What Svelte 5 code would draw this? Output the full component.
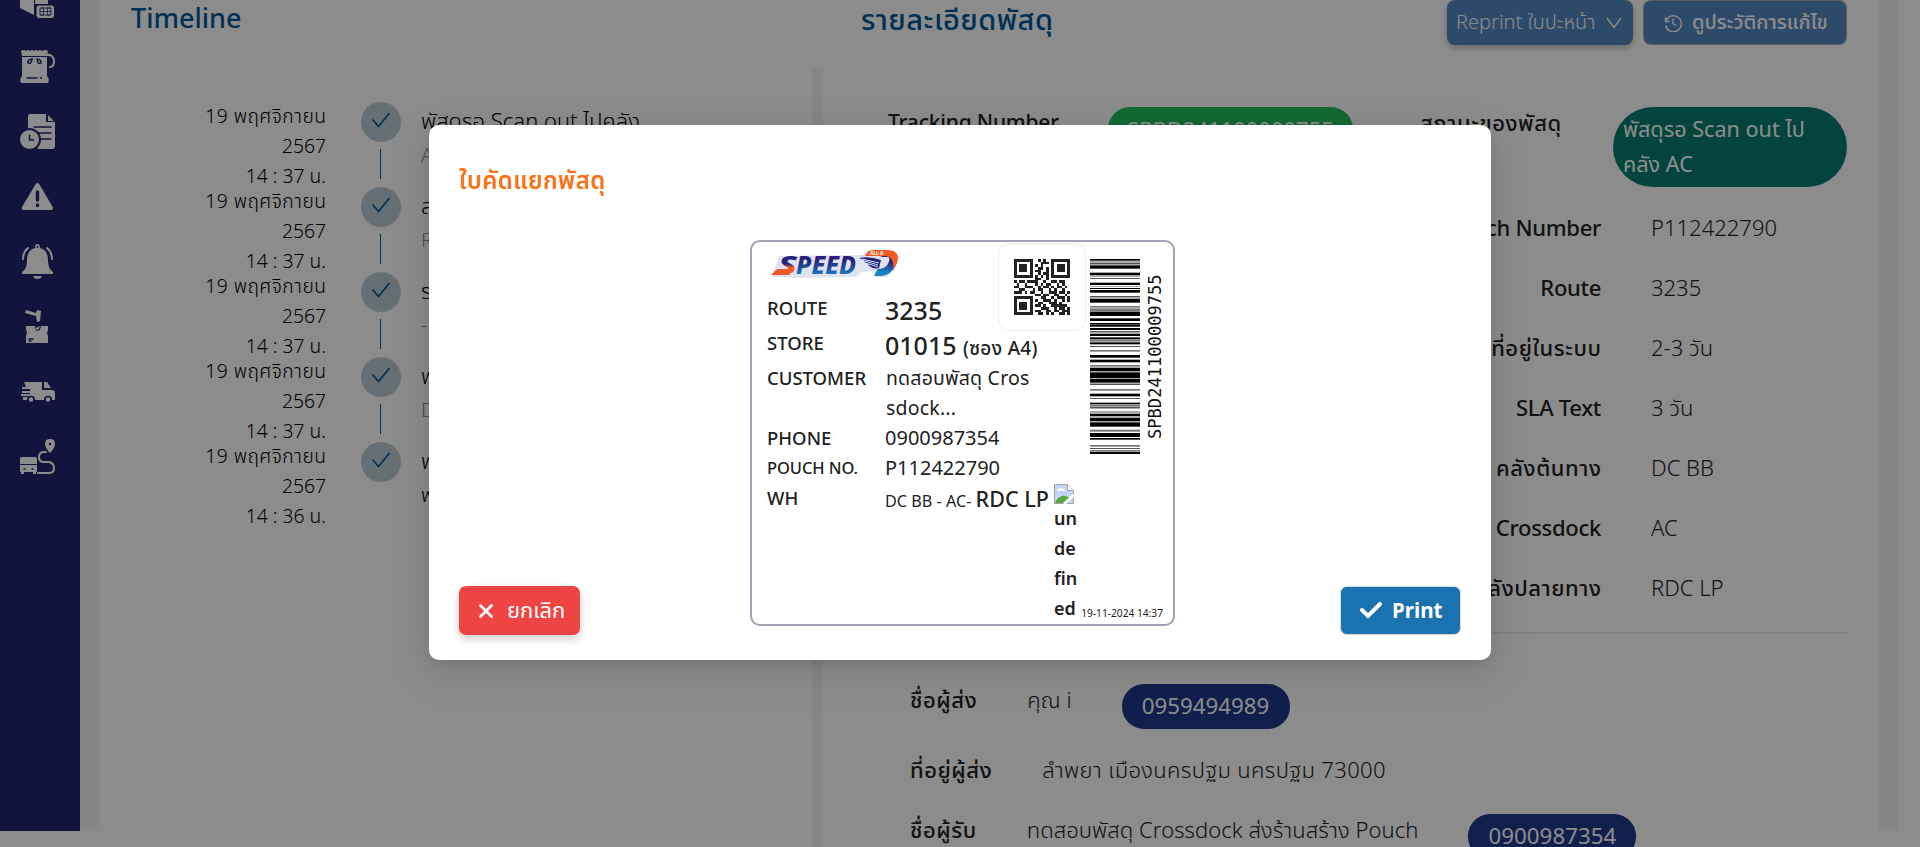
<script>
  const timeline = [
    { time: '14 : 37 น.', title: 'พัสดุรอ Scan out ไปคลัง', note: 'A' },
    { time: '14 : 37 น.', title: 'ส', note: 'R' },
    { time: '14 : 37 น.', title: 'ร', note: '-' },
    { time: '14 : 37 น.', title: 'พ', note: 'D' },
    { time: '14 : 36 น.', title: 'พ', note: 'พ', dark: true }
  ];

  const details = [
    { name: 'Pouch Number', value: 'P112422790' },
    { name: 'Route', value: '3235' },
    { name: 'ที่อยู่ในระบบ', value: '2-3 วัน', thai: true },
    { name: 'SLA Text', value: '3 วัน' },
    { name: 'คลังต้นทาง', value: 'DC BB', thai: true },
    { name: 'คลัง Crossdock', value: 'AC' },
    { name: 'คลังปลายทาง', value: 'RDC LP', thai: true }
  ];

  const qr = [
    '111111100101001111111',
    '100000100011101000001',
    '101110101010001011101',
    '101110100110101011101',
    '101110101100101011101',
    '100000100101101000001',
    '111111101010101111111',
    '000000001100100000000',
    '101101111001001101100',
    '010010001010110010100',
    '110011100101101011010',
    '001100010110010100100',
    '111010110010011101101',
    '000000001101100110010',
    '111111100011001011101',
    '100000101001110100101',
    '101110100110011101000',
    '101110101101001111110',
    '101110100011100101101',
    '100000101100110110111',
    '111111100110101001101'
  ];

  // [offset, thickness, shade] in thirds of a pixel
  const bars = [
    [0, 5, 0], [8, 2, 0], [13, 3, 0], [19, 10, 0], [41, 7, 0], [50, 2, 0], [57, 2, 0],
    [71, 7, 0], [82, 2, 1], [87, 3, 0], [93, 8, 0], [111, 2, 0], [116, 2, 0],
    [120, 11, 0], [141, 3, 1], [146, 2, 0], [150, 7, 1], [158, 13, 0],
    [178, 8, 0], [192, 3, 0], [196, 7, 0], [207, 6, 0], [217, 3, 0], [224, 7, 0],
    [235, 6, 0], [242, 6, 1], [250, 6, 0], [261, 2, 0], [273, 5, 1],
    [288, 8, 0], [302, 8, 0], [318, 5, 1], [326, 11, 0], [340, 17, 0],
    [359, 12, 0], [374, 3, 0], [390, 5, 1], [404, 8, 0], [417, 2, 0],
    [431, 5, 0], [437, 6, 1], [445, 3, 0], [458, 2, 0], [464, 8, 0],
    [476, 11, 0], [490, 13, 0], [512, 6, 1], [522, 12, 0], [537, 5, 0],
    [558, 5, 1], [568, 2, 0], [573, 5, 1], [579, 6, 0]
  ];
</script>

<div class="page">
  <nav class="sidebar">
    <svg viewBox="0 0 35 35"><path d="M0 8 14 14V31L0 24zM15 14 28 8V20H15z" /><rect class="chip" x="16" y="21" width="18.500" height="13.500" rx="3" /><path class="cut fine" d="M23 24h-3v7h3M28 24h3v7h-3M20 27.500h11M23.500 24v7M27.500 24v7M21 24h9M21 31h9" /></svg>
    <svg viewBox="0 0 35 35"><path d="M1 2q3-2 5 0 2-2 4 0 2-2 4 0 2-2 4 0 2-2 4 0 3-2 6 0l-1 5H2zM2 8h25v19q3 3 1 7H1q-2-4 1-7z" /><path class="line" d="M27 6q6-1 7 6 0 6-4 6" /><path class="cut" d="M12 10q-5 1-4 4 3 2 4-4q1 0 0 0M17 10q5 1 4 4-3 2-4-4M7 29h10M20.500 29h1" /></svg>
    <svg viewBox="0 0 35 35"><path d="M8 2q0-2 2-2h16v8h9v24q0 3-3 3H18l-10-17zM28 1l6 6h-6z" /><path class="cut" d="M14 13h17M17 19h14M19 25h12" /><circle class="ring" cx="9.500" cy="25.500" r="10.500" /><path class="cut" d="M9.500 21v5h4" /></svg>
    <svg viewBox="0 0 35 35"><path d="M15.800 5q1.700-2 3.400 0l13.500 23q1 3-2 3H4q-3 0-2-3z" /><path class="cut thick" d="M17.500 13v8M17.500 26v.5" /></svg>
    <svg viewBox="0 0 35 35"><path d="M15 4q0-4 2.500-4T20 4q8 2 8 12 0 9 5 12v2H2v-2q5-3 5-12Q7 6 15 4zM13 32h9q-1 3-4.500 3T13 32z" /><path class="line" d="M8 4q-5 4-5 11M27 4q5 4 5 11" /><circle class="dot" cx="17.500" cy="3" r="1" /></svg>
    <svg viewBox="0 0 35 35"><path d="m6 1 10 3 1-3 4 1-1 10-3 1-1-6L5 4zM6 17h9l1 5 4-1 1-4h7v4l-1 3 1 3v7H6v-7l1-3-1-4z" /><path class="cut" d="M9 30h4M9 32h2" /><path d="m16 19 4-2-1 3-3 1z" /></svg>
    <svg viewBox="0 0 35 35"><path d="M4 8h18v8h11q2 1 2 3v7h-3a4 4 0 0 0-8 0H15a4 4 0 0 0-8 0H3v-3h9v-1H1v-2h9v-1H2v-2h8v-2H2v-2h4zM24 8h3l4 6h-7z" /><circle class="hole" cx="11" cy="25.500" r="3" /><circle class="hole" cx="28" cy="25.500" r="3" /></svg>
    <svg viewBox="0 0 35 35"><path d="M30 0q5 0 5 5 0 4-5 9-5-5-5-9 0-5 5-5zM0 20q0-2 2-2h13q2 0 2 2v5H0zM0 26h17v7h-1v2h-3v-2H4v2H1v-2H0z" /><path class="line" d="M26 13h-3q-4 1-4 5 0 5 5 5h5q5 1 5 6t-5 5H18" /><circle class="dot" cx="30" cy="5" r="1.300" /><path class="cut" d="M4 30h1M12 30h1" /></svg>
  </nav>

  <main>
    <header class="head">
      <h2 class="t-timeline">Timeline</h2>
      <h2 class="t-detail">รายละเอียดพัสดุ</h2>
      <div class="actions">
        <button class="reprint"><span>Reprint ใบปะหน้า</span>
          <svg viewBox="0 0 16 12" width="16" height="12"><path d="m1 1 7 9.500L15 1" /></svg>
        </button>
        <button class="history">
          <svg viewBox="0 0 18 18" width="18" height="18"><path d="M1.500 3.500v4h4M2 6.500a8 8 0 1 1-.5 5M9 4.500v5l3.500 2" /></svg>
          <span>ดูประวัติการแก้ไข</span>
        </button>
      </div>
    </header>

    <div class="body">
      <ol class="timeline">
        {#each timeline as item, i}
          <li>
            <div class="date"><span>19 พฤศจิกายน</span><br />2567<br />{item.time}</div>
            <div class="mark">
              <span class="circle"><svg viewBox="0 0 20 18" width="20" height="18"><path d="m1.500 8.500 6 7L18.500 2" /></svg></span>
              {#if i < timeline.length - 1}<span class="stem"></span>{/if}
            </div>
            <div class="event"><p>{item.title}</p><p class:muted={!item.dark}>{item.note}</p></div>
          </li>
        {/each}
      </ol>
      <div class="divider"></div>
      <section class="info">
        <div class="top">
          <b class="tracking">Tracking Number</b>
          <span class="pill green">SPBD241100009755</span>
          <b class="status thai">สถานะของพัสดุ</b>
          <span class="pill teal">พัสดุรอ Scan out ไป<br />คลัง AC</span>
        </div>
        <dl>
          {#each details as row}
            <dt class:thai={row.thai}>{row.name}</dt><dd>{row.value}</dd>
          {/each}
        </dl>
        <hr />
        <div class="person">
          <b class="thai">ชื่อผู้ส่ง</b><span class="name">คุณ i</span><span class="pill navy">0959494989</span>
        </div>
        <div class="person address">
          <b class="thai">ที่อยู่ผู้ส่ง</b><span class="name wide">ลำพยา เมืองนครปฐม นครปฐม 73000</span>
        </div>
        <div class="person">
          <b class="thai">ชื่อผู้รับ</b><span class="name">ทดสอบพัสดุ Crossdock ส่งร้านสร้าง Pouch</span><span class="pill navy">0900987354</span>
        </div>
      </section>
    </div>
  </main>

  <div class="overlay">
    <div class="modal">
      <h3>ใบคัดแยกพัสดุ</h3>
      <div class="label">
        <div class="left">
          <svg class="logo" viewBox="0 0 128 30" width="128" height="30">
            <defs>
              <linearGradient id="blue" x1="0" y1="0" x2="0" y2="1"><stop offset=".4" stop-color="#26217c" /><stop offset=".85" stop-color="#1683c5" /></linearGradient>
              <linearGradient id="mix" x1="0" y1="0" x2="0" y2="1"><stop offset=".5" stop-color="#26217c" /><stop offset=".6" stop-color="#f15a24" /></linearGradient>
            </defs>
            <path class="shade" d="M1 28h18l4 1 62-1 5-5 12-1 2 6h12l8-8 4-13-6-6H97l-6 5-83 1z" />
            <path fill="#f15a24" d="m0 26 6-6h16l-4 6z" />
            <text class="wordmark" x="7" y="25" textLength="19" lengthAdjust="spacingAndGlyphs" fill="url(#mix)">S</text>
            <text class="wordmark" x="25" y="25" textLength="60" lengthAdjust="spacingAndGlyphs" fill="url(#blue)">PEED</text>
            <path fill="#26217c" d="M88 9q11-2 22 2l-2 8q-5 2-11-3l2-1-6-2 2-1z" />
            <path d="m91 10 17 4M94 12l13 4M98 15l9 3" stroke="#c8dcf2" fill="none" />
            <path fill="url(#blue)" d="M109 8h8q3 1 0 7-3 5-10 5l-4 7h7q10 0 15-12 3-10-3-12z" />
            <path fill="#f15a24" d="M94 7q2-6 9-6h13q14 0 10 13l-4 8q2-15-8-15z" />
            <text class="tiny" x="99" y="5.500">ALL-D</text>
          </svg>
          <div class="fields">
            <span>ROUTE</span><strong class="big">3235</strong>
            <span>STORE</span><strong class="big">01015 <small>(ซอง A4)</small></strong>
            <span>CUSTOMER</span><span class="customer">ทดสอบพัสดุ Cros<br />sdock...</span>
            <span>PHONE</span><span class="num">0900987354</span>
            <span class="narrow">POUCH NO.</span><span class="num">P112422790</span>
            <span>WH</span><span class="wh">DC BB - AC- <strong>RDC LP</strong></span>
          </div>
        </div>
        <div class="qr">
          <svg viewBox="0 0 21 21" width="56" height="56" shape-rendering="crispEdges">
            {#each qr as row, y}
              {#each [...row] as cell, x}
                {#if cell === '1'}<rect {x} {y} width="1" height="1" />{/if}
              {/each}
            {/each}
          </svg>
        </div>
        <div class="broken">
          <svg viewBox="0 0 20 20" width="20" height="20"><path fill="#c3d5f7" stroke="#a3a3a3" d="M.5.5h13l6 6v13H.5z" /><path fill="#fff" stroke="#a3a3a3" d="M13.500.5v6h6" /><path fill="#fff" d="M3 7q0-2 2-2 2-3 4 0 2 0 2 2z" /><path fill="#56a83a" d="M1 19q2-5 5-6 3-3 8 0l3 2-4 4z" /><path stroke="#fff" stroke-width="3" d="m10 20 10-9" /></svg>
          <span>un<br />de<br />fin<br />ed</span>
        </div>
        <div class="code">
          <svg viewBox="0 0 150 585" width="50" height="195" preserveAspectRatio="none">
            {#each bars as [y, height, shade]}
              <rect x="0" {y} width="150" {height} fill={shade ? '#777' : '#000'} />
            {/each}
          </svg>
          <span>SPBD241100009755</span>
        </div>
        <time>19-11-2024 14:37</time>
      </div>
      <div class="footer">
        <button class="cancel"><svg viewBox="0 0 14 14" width="14" height="14"><path d="m1.500 1.500 11 11m0-11-11 11" /></svg><span>ยกเลิก</span></button>
        <button class="print"><svg viewBox="0 0 22 17" width="22" height="17"><path d="m2 8 6 6L20 2" /></svg><span>Print</span></button>
      </div>
    </div>
  </div>
</div>

<style>
  :global(body) { margin: 0; background: #fff; overflow: hidden; }
  * { box-sizing: border-box; }
  .page {
    position: relative; display: flex; align-items: flex-start; width: 1920px; height: 847px; overflow: hidden;
    font-family: "Noto Sans", "Noto Sans Thai", sans-serif; font-size: 22px; line-height: 30px; color: #222;
  }
  h2, h3, p, ol, dl, dd { margin: 0; padding: 0; }
  svg { display: block; flex: none; }
  button { border: 0; padding: 0; font: inherit; display: flex; align-items: center; white-space: nowrap; }

  .sidebar { width: 80px; height: 831px; flex: none; background: #232570; display: flex; flex-direction: column; gap: 30px; padding-left: 20px; }
  .sidebar svg { width: 35px; height: 35px; fill: #fff; }
  .sidebar svg:first-child { margin-top: -16px; }
  .sidebar .line { fill: none; stroke: #fff; stroke-width: 2; stroke-linecap: round; }
  .sidebar .cut { fill: none; stroke: #232570; stroke-width: 1.5; stroke-linecap: round; }
  .sidebar .fine { stroke-width: .8; }
  .sidebar .chip { stroke: #232570; stroke-width: 1; }
  .sidebar .thick { stroke-width: 3.4; }
  .sidebar .ring { stroke: #232570; stroke-width: 2; }
  .sidebar .dot { fill: #232570; }
  .sidebar .hole { fill: #fff; stroke: #232570; stroke-width: 1.5; }

  main { width: 1819px; height: 847px; padding: 0 20px; background: linear-gradient(#f3f4f6 831px, #fff 831px); }
  .head { display: flex; height: 69px; padding: 0 33px 0 31px; background: #fff; color: #015a9b; }
  h2 { font-weight: 500; line-height: 36px; white-space: nowrap; }
  .t-timeline { width: 730px; font-size: 27px; }
  .t-detail { font-size: 29px; letter-spacing: .45px; padding-top: 1px; }
  .actions { display: flex; gap: 11px; margin-left: auto; }
  .actions svg path { fill: none; stroke: #fff; stroke-width: 1.4; }
  .actions button { color: #fff; background: #5487c1; font-size: 20px; }
  .actions span { padding-bottom: 2px; }
  .reprint { width: 186px; height: 45px; border-radius: 8px; padding-left: 9px; gap: 11px; font-weight: 350; box-shadow: 0 3px 6px rgba(0,0,0,.25); }
  .history { width: 202px; height: 43px; margin-top: 1px; border-radius: 7px; padding-left: 20px; gap: 10px; font-weight: 500; box-shadow: 0 0 0 1px #aaa; }

  .body { display: grid; grid-template-columns: 712px 11px 1fr; height: 778px; background: #fff; }
  .divider { background: #f3f4f6; }
  .timeline { list-style: none; padding-top: 33px; }
  .timeline li { display: flex; height: 85px; }
  .date { width: 226px; margin-top: -1px; text-align: right; font-size: 19.300px; font-weight: 350; color: #000; white-space: nowrap; }
  .date span { letter-spacing: .45px; margin-right: -.45px; }
  .mark { width: 40px; margin: 0 21px 0 35px; display: flex; flex-direction: column; align-items: center; gap: 7px; }
  .circle { display: grid; place-items: center; width: 40px; height: 40px; flex: none; border-radius: 50%; background: #bbcdd4; }
  .circle path { fill: none; stroke: #01579b; stroke-width: 1.7; }
  .circle svg { margin-top: -4px; }
  .stem { width: 1px; height: 30px; margin-right: 1px; background: #01579b; }
  .event { padding-top: 3px; margin-left: -1px; font-size: 22px; font-weight: 300; white-space: nowrap; color: #000; }
  .event p + p { margin-top: 5px; font-size: 20px; }
  .muted { color: #8c8c8c; }

  .info { padding: 38px 0 0 65px; color: #222; }
  .info b, dt { font-weight: 550; letter-spacing: -.3px; white-space: nowrap; }
  .info .thai { letter-spacing: .55px; }
  .top { display: flex; align-items: flex-start; height: 90px; }
  .info .tracking { width: 220px; font-size: 21px; letter-spacing: -.2px; }
  .status { width: 193px; }
  .pill { color: #fff; white-space: nowrap; }
  .green { width: 245px; height: 45px; margin-right: 67px; border-radius: 22px; background: #22c05b; line-height: 44px; text-align: center; font-size: 22px; }
  .teal { width: 234px; height: 80px; border-radius: 40px; background: #067f72; padding: 4px 10px; line-height: 35px; font-size: 21.600px; }
  dl { display: grid; grid-template-columns: 713px 1fr; column-gap: 50px; grid-auto-rows: 60px; line-height: 60px; }
  dt.thai { margin-right: -.5px; }
  dt { text-align: right; }
  dd { font-weight: 300; }
  hr { width: 937px; height: 2px; border: 0; margin: 15px 0 50px 22px; background: #e5e7eb; }
  .person { display: flex; height: 45px; padding-left: 22px; margin-bottom: 24px; }
  .person b, .name { padding-top: 0; margin-right: 50px; white-space: nowrap; }
  .name { font-weight: 300; letter-spacing: .06px; }
  .wide { letter-spacing: .35px; }
  .address { height: 37px; }
  .address b, .address .name { padding-top: 1px; }
  .navy { width: 168px; height: 45px; border-radius: 22px; background: #1e3a8a; line-height: 43px; text-align: center; font-size: 22.300px; }

  .overlay { position: absolute; inset: 0; background: rgba(0,0,0,.45); padding: 125px 0 0 429px; }
  .modal { width: 1062px; height: 535px; border-radius: 10px; background: #fff; padding: 37px 30px 0; box-shadow: 0 12px 48px 16px rgba(0,0,0,.03), 0 9px 28px rgba(0,0,0,.08), 0 6px 16px -8px rgba(0,0,0,.18); }
  h3 { height: 78px; color: #f97316; font-size: 24px; letter-spacing: .4px; font-weight: 600; line-height: 36px; }
  .label { display: grid; position: relative; grid-template-columns: 246px 88px 1fr; width: 425px; height: 386px; margin-left: 291px; border: 2px solid #9fa3b5; border-radius: 10px; background: #fff; }
  .left { padding: 7px 0 0 15px; font-weight: 500; font-size: 18px; }
  .logo { margin-left: 4px; }
  .shade { fill: #dfe3ef; }
  .wordmark { font: italic 800 25px "Noto Sans", sans-serif; }
  .tiny { font: italic 700 5px "Noto Sans", sans-serif; fill: #fff; }
  .fields { display: grid; width: 300px; grid-template-columns: 118px 1fr; grid-template-rows: 35px 35px 60px 30px 30px 30px; margin-top: 14px; white-space: nowrap; font-size: 18.500px; }
  .big { font-size: 25px; line-height: 35px; font-weight: 500; }
  .fields strong { font-weight: 500; }
  .big small { font-size: 19px; letter-spacing: .3px; }
  .customer { font-weight: 400; font-size: 19.500px; letter-spacing: .2px; padding-left: 1px; }
  .num { font-size: 20px; font-weight: 400; }
  .narrow { font-size: 16.500px; letter-spacing: -.1px; }
  .wh { font-size: 16.200px; font-weight: 400; line-height: 31px; }
  .wh strong { font-size: 21.500px; }
  .qr { width: 88px; height: 88px; margin-top: 1px; border: 1px solid #eee; border-radius: 11px; background: #fff; padding: 15px; }
  .qr svg { fill: #222; }
  .broken { position: absolute; left: 302px; top: 242px; font-size: 18px; font-weight: 600; }
  .broken span { display: block; margin-top: -1px; }
  .code { display: flex; gap: 7px; padding: 17px 0 0 4px; height: 240px; }
  .code span { writing-mode: vertical-rl; transform: rotate(180deg); font: 17.100px/17px "DejaVu Sans Mono", monospace; height: 165px; margin-top: 15px; color: #111; }
  time { position: absolute; right: 10px; bottom: 1px; font-size: 10.200px; line-height: 20px; }
  .footer { display: flex; justify-content: space-between; align-items: center; margin-top: -40px; height: 49px; }
  .footer span { color: #fff; padding-bottom: 4px; }
  .footer path { fill: none; stroke: #fff; stroke-width: 2.6; stroke-linecap: round; }
  .cancel { width: 121px; height: 49px; border-radius: 7px; background: #ef4444; padding-left: 20px; gap: 14px; box-shadow: 0 4px 10px rgba(0,0,0,.2); }
  .print { width: 121px; height: 49px; border-radius: 7px; border: 1px solid #d9d9d9; background: #1a72b0; padding-left: 19px; gap: 10px; font-weight: 700; }
  .print span { font-size: 20.600px; padding-bottom: 2px; }
  .print path { stroke-width: 4; }
</style>
